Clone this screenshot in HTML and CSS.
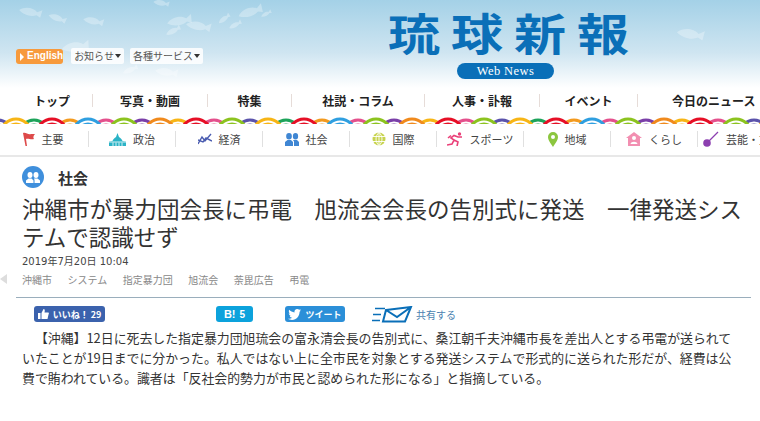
FILE: index.html
```html
<!DOCTYPE html>
<html lang="ja">
<head>
    <meta charset="UTF-8">
    <title>琉球新報</title>
    <link rel="stylesheet" href="styles.css">
</head>
<body>
    <header class="header">
        <svg class="fish" width="760" height="88" viewBox="0 0 760 88">
            <defs>
                <path id="f" d="M-11 0C-6-5 3-5 7-1L12-4L11 4L7 2C2 5-6 4-11 0Z"/>
            </defs>
            <use href="#f" transform="translate(30 12) rotate(10)"/>
            <use href="#f" transform="translate(57 18) rotate(18) scale(.8)"/>
            <use href="#f" transform="translate(93 21) rotate(10) scale(.9)"/>
            <use href="#f" transform="translate(161 3) rotate(8) scale(.7)"/>
            <use href="#f" transform="translate(179 21) rotate(-12) scale(1.1)"/>
            <use href="#f" transform="translate(198 26) rotate(8) scale(1.1)"/>
            <use href="#f" transform="translate(173 31) rotate(-30) scale(.7)"/>
            <use href="#f" transform="translate(224 19) rotate(-40) scale(.6)"/>
            <use href="#f" transform="translate(235 25) rotate(-30) scale(.6)"/>
            <use href="#f" transform="translate(250 12) rotate(-20) scale(1.1)"/>
            <use href="#f" transform="translate(266 14) rotate(-30) scale(.5)"/>
            <use href="#f" transform="translate(75 47) rotate(-10) scale(1.2)"/>
            <use href="#f" transform="translate(166 72) rotate(6) scale(1)"/>
            <use href="#f" transform="translate(130 70) rotate(-25) scale(.7)"/>
            <use href="#f" transform="translate(690 34) rotate(8) scale(1.2)"/>
        </svg>
        <div class="tools">
            <a class="tool-english">English</a>
            <a class="tool-menu">お知らせ</a>
            <a class="tool-menu">各種サービス</a>
        </div>
        <div class="logo">
            <div class="logo-name">琉球新報</div>
            <div class="logo-pill">Web News</div>
        </div>
    </header>

    <nav class="nav">
        <a style="width:81px">トップ</a>
        <a style="width:115px">写真・動画</a>
        <a style="width:84px">特集</a>
        <a style="width:133px">社説・コラム</a>
        <a style="width:115px">人事・訃報</a>
        <a style="width:98px">イベント</a>
        <a class="last">今日のニュース</a>
    </nav>

    <svg class="wave" width="760" height="7">
        <defs>
            <pattern id="wave" width="252" height="7" patternUnits="userSpaceOnUse" patternTransform="translate(-2 0)">
                <g fill="#fff" stroke-width="3">
                    <circle cx="0" cy="17" r="14" stroke="#5b53ab"/><circle cx="0" cy="17" r="9" stroke="#5b53ab"/>
                    <circle cx="252" cy="17" r="14" stroke="#5b53ab"/><circle cx="252" cy="17" r="9" stroke="#5b53ab"/>
                    <circle cx="36" cy="17" r="14" stroke="#1da35a"/><circle cx="36" cy="17" r="9" stroke="#1da35a"/>
                    <circle cx="72" cy="17" r="14" stroke="#f39a1e"/><circle cx="72" cy="17" r="9" stroke="#f39a1e"/>
                    <circle cx="108" cy="17" r="14" stroke="#e4508c"/><circle cx="108" cy="17" r="9" stroke="#e4508c"/>
                    <circle cx="144" cy="17" r="14" stroke="#7a3fa8"/><circle cx="144" cy="17" r="9" stroke="#7a3fa8"/>
                    <circle cx="180" cy="17" r="14" stroke="#f7b516"/><circle cx="180" cy="17" r="9" stroke="#f7b516"/>
                    <circle cx="216" cy="17" r="14" stroke="#e4508c"/><circle cx="216" cy="17" r="9" stroke="#e4508c"/>
                    <circle cx="18" cy="17" r="15" stroke="#f7b516"/><circle cx="18" cy="17" r="10" stroke="#f7b516"/>
                    <circle cx="54" cy="17" r="15" stroke="#e60f26"/><circle cx="54" cy="17" r="10" stroke="#e60f26"/>
                    <circle cx="90" cy="17" r="15" stroke="#2f9fe0"/><circle cx="90" cy="17" r="10" stroke="#2f9fe0"/>
                    <circle cx="126" cy="17" r="15" stroke="#8cc31f"/><circle cx="126" cy="17" r="10" stroke="#8cc31f"/>
                    <circle cx="162" cy="17" r="15" stroke="#f08a1d"/><circle cx="162" cy="17" r="10" stroke="#f08a1d"/>
                    <circle cx="198" cy="17" r="15" stroke="#e60f26"/><circle cx="198" cy="17" r="10" stroke="#e60f26"/>
                    <circle cx="234" cy="17" r="15" stroke="#8cc31f"/><circle cx="234" cy="17" r="10" stroke="#8cc31f"/>
                </g>
            </pattern>
        </defs>
        <rect width="760" height="7" fill="url(#wave)"/>
    </svg>

    <nav class="subnav">
        <a><svg width="13" height="14" viewBox="0 0 13 14"><path fill="#dd4a4a" d="M1 1C4 0 6 3 9 2L13 2C11 4 11 6 12 7C9 8 6 6 4 7L5 14L3.500 14Z"/></svg>主要</a>
        <a><svg width="17" height="13" viewBox="0 0 17 13"><path fill="#2ab3c6" d="M8.500 0L10 4C12 5 13 7 13.500 8L17 8.500V13H0V8.500L3.500 8C4 7 5 5 7 4Z"/><path stroke="#fff" stroke-width=".8" d="M4 9.500V13M7 9.500V13M10 9.500V13M13 9.500V13M0 9h17"/></svg>政治</a>
        <a><svg width="14" height="12" viewBox="0 0 14 12"><path fill="none" stroke="#4a5cb0" stroke-width="1.400" d="M0 11L4 4L7 8L13 1M0 7L5 9L8 5L14 8"/></svg>経済</a>
        <a><svg width="14" height="13" viewBox="0 0 14 13"><path fill="#3f86d3" d="M4 0a2.800 3.200 0 0 1 0 6.500a2.800 3.200 0 0 1 0-6.500ZM10.500 0a2.600 3.200 0 0 1 0 6.500a2.600 3.200 0 0 1 0-6.500ZM0 13V9L2.500 7H6L8 9V13ZM9 13V8.500L8 7H12L14 9V13Z"/></svg>社会</a>
        <a><svg width="14" height="14" viewBox="0 0 14 14"><circle cx="7" cy="7" r="6.500" fill="#c7d34e"/><path fill="none" stroke="#fff" stroke-width=".9" d="M0 4.500H14M0 9.500H14M7 0V14M7 .5C3 4 3 10 7 13.500M7 .5C11 4 11 10 7 13.500"/></svg>国際</a>
        <a><svg width="16" height="14" viewBox="0 0 16 14"><circle cx="12.500" cy="2" r="1.700" fill="#ea3f78"/><path fill="none" stroke="#ea3f78" stroke-width="1.600" d="M0 13L5 12L7 8L4 6L7 3.500L11 5L15 5M7 8L11 10L10 14M1 6L4 3.500"/></svg>スポーツ</a>
        <a><svg width="10" height="15" viewBox="0 0 10 15"><path fill-rule="evenodd" fill="#8cc63f" d="M5 0a5 5 0 0 1 5 5C10 8 7 12 5 15C3 12 0 8 0 5a5 5 0 0 1 5-5ZM5 3a2 2 0 1 0 0 4a2 2 0 0 0 0-4Z"/></svg>地域</a>
        <a><svg width="16" height="14" viewBox="0 0 16 14"><path fill-rule="evenodd" fill="#f28fb1" d="M8 0L16 6H14V14H2V6H0ZM8 4a2 2 0 1 0 0 4a2 2 0 0 0 0-4ZM4.500 12H11.500C11 9 5 9 4.500 12Z"/></svg>くらし</a>
        <a><svg width="16" height="16" viewBox="0 0 16 16"><circle cx="4" cy="12" r="3.800" fill="#8c3fb0"/><path stroke="#8c3fb0" stroke-width="1.200" d="M5 11L15 1"/></svg>芸能・文化</a>
    </nav>

    <main class="article">
        <span class="arrow"></span>
        <div class="category">
            <span class="category-icon"><svg width="14" height="13" viewBox="0 0 14 13"><path fill="#fff" d="M4 1a2.500 3 0 0 1 0 6a2.500 3 0 0 1 0-6ZM10 1a2.500 3 0 0 1 0 6a2.500 3 0 0 1 0-6ZM0 12V9.500L2.500 7.500H5.500L7.500 9.500V12ZM8.500 12V9L8 7.500H11.500L14 9.500V12Z"/></svg></span>
            社会
        </div>
        <h1 class="title">沖縄市が暴力団会長に弔電　旭流会会長の告別式に発送　一律発送システムで認識せず</h1>
        <div class="date">2019年7月20日 10:04</div>
        <ul class="tags">
            <li>沖縄市</li>
            <li>システム</li>
            <li>指定暴力団</li>
            <li>旭流会</li>
            <li>荼毘広告</li>
            <li>弔電</li>
        </ul>
        <div class="share">
            <a class="btn btn-like"><svg width="11" height="10" viewBox="0 0 11 10"><path fill="#fff" d="M0 4H2.500V10H0ZM3.500 4L5.500 0C7 0 7 1.500 6.500 3.500H10.500C11 4 11 5 10.500 5.500L9.500 10H3.500Z"/></svg>いいね！ 29</a>
            <a class="btn btn-hatena"><b>B!</b> 5</a>
            <a class="btn btn-tweet"><svg width="13" height="11" viewBox="0 0 13 11"><path fill="#fff" d="M13 1.500L11.600 2.800C11.600 7 8.500 11 4 11C2.500 11 1 10.500 0 9.800C1.500 10 3 9.500 4 8.700C3 8.600 2 8 1.700 7C2 7 2.500 7 2.800 7C1.500 6.500 .8 5.500 .8 4.300C1.200 4.500 1.600 4.600 2 4.700C.8 3.800 .5 2 1.200 .8C2.500 2.300 4.400 3.300 6.500 3.400C6.100 1.500 7.500 0 9.200 0C10 0 10.700 .3 11.200 .8L12.800 .2L11.800 1.700Z"/></svg>ツイート</a>
            <a class="mail"><svg width="41" height="17" viewBox="0 0 41 17"><g fill="none" stroke="#0a6fb8"><path stroke-width="1.600" d="M3 2.500H13M1 8.500H9M0 14.500H8"/><path stroke-width="2" d="M14 4L39 1L33 15.500H11ZM14 4L25 11L39 1"/></g></svg>共有する</a>
        </div>
        <p class="body">【沖縄】12日に死去した指定暴力団旭琉会の富永清会長の告別式に、桑江朝千夫沖縄市長を差出人とする弔電が送られていたことが19日までに分かった。私人ではない上に全市民を対象とする発送システムで形式的に送られた形だが、経費は公費で賄われている。識者は「反社会的勢力が市民と認められた形になる」と指摘している。</p>
    </main>
</body>
</html>
```

FILE: styles.css
```css
body {
    margin: 0;
    overflow: hidden;
    background: #fff;
    color: #333;
    font-family: "DejaVu Sans", "Noto Sans CJK JP", sans-serif;
}

a {
    color: inherit;
    text-decoration: none;
}

.header {
    position: relative;
    display: flex;
    height: 88px;
    padding-left: 16px;
    background: linear-gradient(#a4d1e7, #cfe5f1 60%, #fff);
}

.fish {
    position: absolute;
    top: 0;
    left: 0;
    fill: rgba(255, 255, 255, 0.3);
}

.tools {
    position: relative;
    display: flex;
    align-items: center;
    flex: none;
    width: 186px;
    height: 16px;
    margin-top: 48px;
}

.tool-english {
    height: 15px;
    width: 38px;
    padding-left: 11px;
    margin-right: 8px;
    border-radius: 3px;
    background: #f79a3c;
    color: #fff;
    font: bold 10px/14px "Liberation Sans", sans-serif;
    position: relative;
}

.tool-english::before {
    content: "";
    position: absolute;
    left: 4px;
    top: 4px;
    border-left: 4px solid #fff;
    border-top: 4px solid transparent;
    border-bottom: 4px solid transparent;
}

.tool-menu {
    display: flex;
    align-items: center;
    box-sizing: border-box;
    height: 16px;
    padding: 0 3px 1px 3px;
    margin-right: 6px;
    border-radius: 2px;
    background: rgba(255, 255, 255, 0.85);
    color: #555;
    font-family: "Noto Sans CJK JP", sans-serif;
    font-size: 10px;
    white-space: nowrap;
}

.tool-menu::after {
    content: "";
    margin-left: 1px;
    border-top: 4px solid #333;
    border-left: 3px solid transparent;
    border-right: 3px solid transparent;
}

.logo {
    position: relative;
    display: flex;
    flex-direction: column;
    align-items: center;
    flex: none;
    width: 240px;
    margin-left: 186px;
    padding-top: 10px;
}

.logo-name {
    height: 53px;
    color: #0a6fb8;
    font-family: "Noto Sans CJK JP", sans-serif;
    font-size: 52px;
    font-weight: 700;
    line-height: 52px;
    letter-spacing: 11px;
    white-space: nowrap;
    transform: scaleY(0.85);
    transform-origin: top;
    align-self: flex-start;
}

.logo-pill {
    width: 97px;
    height: 16px;
    margin-right: 5px;
    border-radius: 8px;
    background: #0a6fb8;
    color: #fff;
    font-family: "Liberation Serif", serif;
    font-size: 12.500px;
    line-height: 16px;
    letter-spacing: 0.4px;
    text-align: center;
}

.nav {
    display: flex;
    box-sizing: border-box;
    height: 29px;
    padding: 0 0 5px 12px;
    align-items: center;
    color: #222;
    font-family: "Noto Sans CJK JP", sans-serif;
    font-size: 12px;
    font-weight: 700;
    white-space: nowrap;
}

.nav a {
    flex: none;
    border-right: 1px solid #e6dcd8;
    box-sizing: border-box;
    height: 13px;
    line-height: 13px;
    text-align: center;
}

.nav a.last {
    border: none;
    padding-left: 34px;
}

.wave {
    display: block;
}

.subnav {
    display: flex;
    box-sizing: border-box;
    height: 33px;
    padding: 0 0 1px 3px;
    border-bottom: 2px solid #e8e8e8;
    align-items: center;
    color: #444;
    font-family: "Noto Sans CJK JP", sans-serif;
    font-size: 11px;
    white-space: nowrap;
}

.subnav a {
    flex: none;
    display: flex;
    align-items: center;
    justify-content: center;
    gap: 7px;
    box-sizing: border-box;
    width: 87px;
    height: 16px;
    border-right: 1px solid #e0e0e0;
}

.subnav a:first-child {
    width: 86px;
    padding-right: 6px;
}

.subnav a:last-child {
    border: none;
    justify-content: flex-start;
    padding-left: 5px;
}

.article {
    position: relative;
    padding: 8px 10px 0 22px;
}

.arrow {
    position: absolute;
    left: 0;
    top: 117px;
    border-right: 7px solid #ddd;
    border-top: 5px solid transparent;
    border-bottom: 5px solid transparent;
}

.category {
    display: flex;
    align-items: center;
    gap: 14px;
    height: 24px;
    color: #333;
    font-family: "Noto Sans CJK JP", sans-serif;
    font-size: 15px;
    font-weight: 700;
}

.category-icon {
    display: flex;
    align-items: center;
    justify-content: center;
    width: 22px;
    height: 22px;
    border-radius: 50%;
    background: #3f8fdc;
}

.title {
    margin: 5px 0 0;
    width: 725px;
    color: #333;
    font-family: "Noto Sans CJK JP", sans-serif;
    font-size: 22.500px;
    font-weight: 400;
    line-height: 28px;
}

.date {
    margin-top: 5px;
    height: 14px;
    font-size: 10px;
    line-height: 14px;
    color: #444;
}

.tags {
    display: flex;
    gap: 15.500px;
    margin: 4px 0 0;
    padding: 0 0 10px;
    list-style: none;
    color: #888;
    font-family: "Noto Sans CJK JP", sans-serif;
    font-size: 10px;
    line-height: 14px;
}

.share {
    display: flex;
    align-items: center;
    margin-left: -6px;
    margin-right: -1px;
    padding: 8px 0 0 18px;
    height: 16px;
    border-top: 1px solid #9aaebc;
    font-family: "Noto Sans CJK JP", sans-serif;
}

.btn {
    display: flex;
    align-items: center;
    justify-content: center;
    gap: 4px;
    height: 16px;
    border-radius: 3px;
    color: #fff;
    font-size: 9px;
    font-weight: 700;
}

.btn-like {
    width: 71px;
    background: #3b62ad;
}

.btn-hatena {
    width: 37px;
    margin-left: 111px;
    background: #0ca2dc;
    font-family: "Liberation Sans", sans-serif;
    font-size: 10px;
}

.btn-hatena b {
    font-size: 11px;
}

.btn-tweet {
    width: 60px;
    margin-left: 32px;
    background: #2b8fd8;
}

.mail {
    display: flex;
    align-items: center;
    gap: 3px;
    margin-left: 27px;
    color: #4a7fb0;
    font-size: 10px;
}

.body {
    margin: 6px 0 0;
    width: 716px;
    color: #333;
    font-size: 12.900px;
    line-height: 20px;
    text-indent: 1em;
    font-family: "Noto Sans CJK JP", sans-serif;
}
```
